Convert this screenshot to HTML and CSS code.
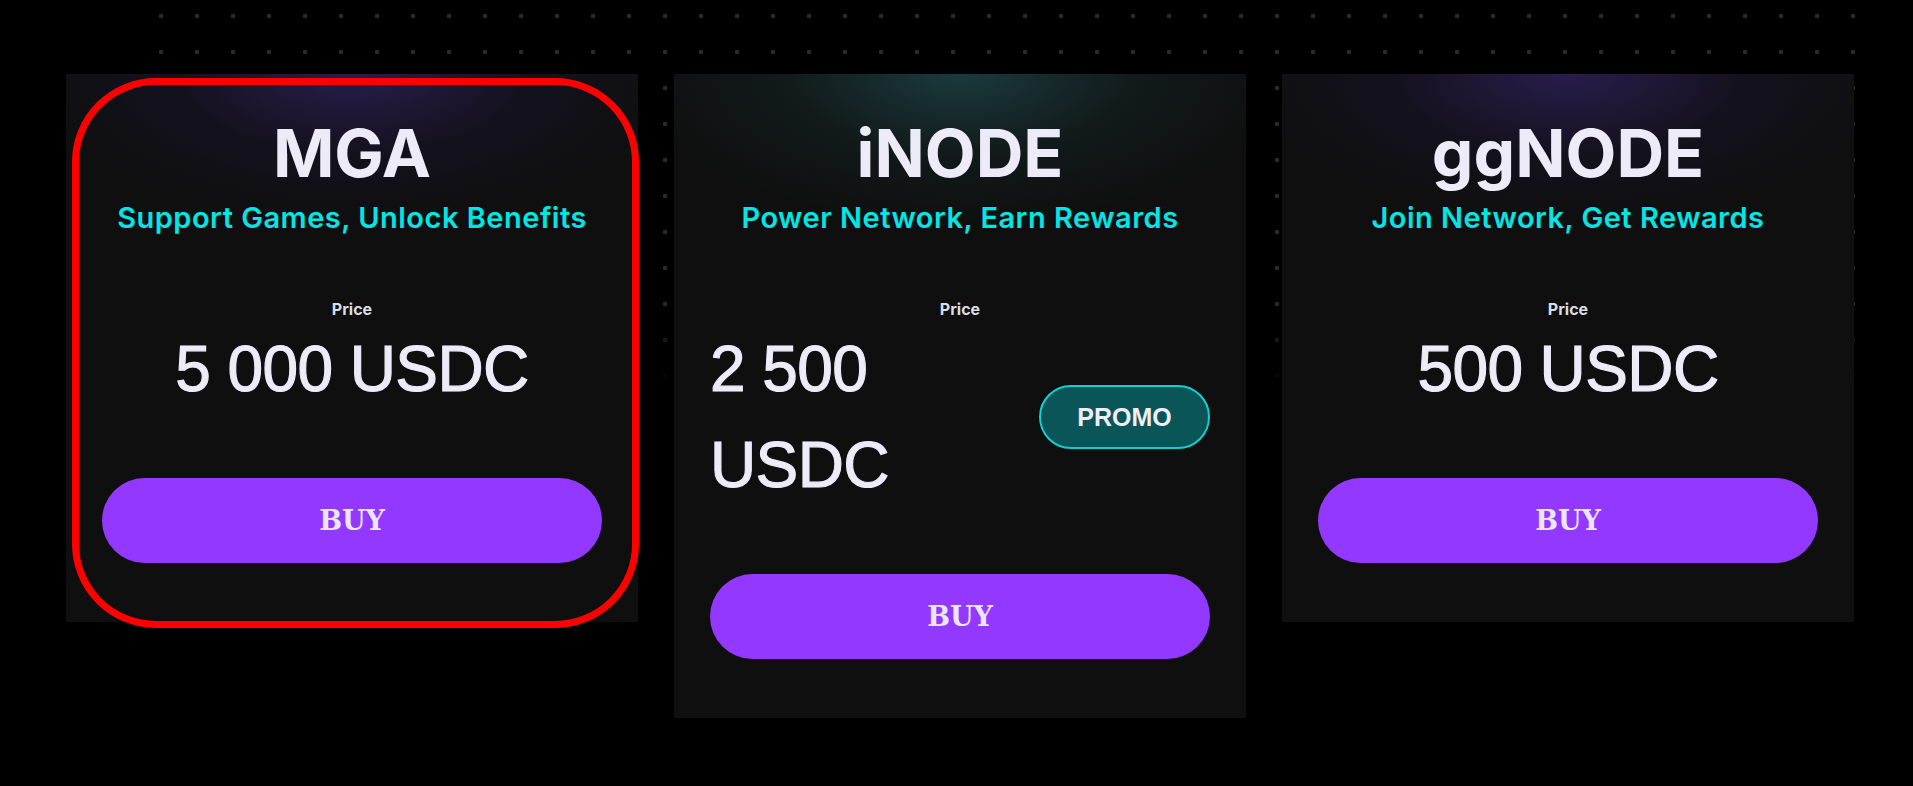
FILE: index.html
```html
<!DOCTYPE html>
<html lang="en">
<head>
<meta charset="utf-8">
<title>Nodes</title>
<link rel="stylesheet" href="styles.css">
</head>
<body>
<div class="dots"></div>
<main class="cards">
  <section class="card card--purple">
    <h2 class="card__title">MGA</h2>
    <p class="card__sub">Support Games, Unlock Benefits</p>
    <p class="card__label">Price</p>
    <div class="card__price">5 000 USDC</div>
    <button class="card__buy">BUY</button>
    <div class="highlight"></div>
  </section>
  <section class="card card--teal">
    <h2 class="card__title">iNODE</h2>
    <p class="card__sub">Power Network, Earn Rewards</p>
    <p class="card__label">Price</p>
    <div class="card__price-row">
      <div class="card__price card__price--left">2 500 USDC</div>
      <span class="promo">PROMO</span>
    </div>
    <button class="card__buy">BUY</button>
  </section>
  <section class="card card--purple">
    <h2 class="card__title">ggNODE</h2>
    <p class="card__sub">Join Network, Get Rewards</p>
    <p class="card__label">Price</p>
    <div class="card__price">500 USDC</div>
    <button class="card__buy">BUY</button>
  </section>
</main>
</body>
</html>
```
FILE: styles.css
```css
* { box-sizing: border-box; }
html, body {
  margin: 0;
  padding: 0;
  background: #000;
  width: 1913px;
  height: 786px;
  overflow: hidden;
}
body {
  position: relative;
  font-family: Inter, "Noto Sans", sans-serif;
  color: #ecebf7;
}
.dots {
  position: absolute;
  left: 143px;
  top: 0;
  width: 1736px;
  height: 400px;
  background-image: radial-gradient(circle at 18px 16px, #2a2a2a 0 2px, transparent 2.6px);
  background-size: 36px 36px;
  -webkit-mask-image: linear-gradient(to bottom, #000 0, #000 300px, transparent 390px);
  mask-image: linear-gradient(to bottom, #000 0, #000 300px, transparent 390px);
  pointer-events: none;
}
.cards {
  position: relative;
  display: flex;
  align-items: flex-start;
  gap: 36px;
  padding: 74px 0 0 66px;
}
.card {
  position: relative;
  width: 572px;
  padding: 40px 36px 59px;
  background-color: #0f0f0f;
  display: flex;
  flex-direction: column;
  align-items: stretch;
  text-align: center;
}
.card--purple {
  background-image: radial-gradient(ellipse 330px 150px at 50% 0%, rgba(48, 34, 96, 0.75), rgba(30, 22, 60, 0.3) 55%, rgba(15, 15, 15, 0) 100%);
}
.card--teal {
  background-image: radial-gradient(ellipse 330px 150px at 50% 0%, rgba(30, 68, 72, 0.8), rgba(22, 44, 46, 0.35) 55%, rgba(15, 15, 15, 0) 100%);
}
.card__title {
  margin: 0;
  font-size: 66px;
  line-height: 79px;
  font-weight: 700;
  letter-spacing: 0;
  color: #ecebf7;
}
.card__sub {
  margin: 8px 0 0;
  font-size: 29px;
  line-height: 34px;
  font-weight: 600;
  color: #00e6e6;
  letter-spacing: 0.5px;
}
.card__label {
  margin: 64px 0 0;
  font-size: 16px;
  line-height: 20px;
  font-weight: 700;
  color: #dcdce4;
}
.card__price {
  margin-top: 2px;
  font-family: "Liberation Sans", Arial, sans-serif;
  font-size: 64px;
  line-height: 96px;
  font-weight: 400;
  letter-spacing: -0.6px;
  color: #ecebf7;
  -webkit-text-stroke: 1.1px #ecebf7;
}
.card__price-row {
  margin-top: 2px;
  display: flex;
  align-items: center;
  justify-content: space-between;
}
.card__price--left {
  margin-top: 0;
  width: 300px;
  text-align: left;
}
.promo {
  display: flex;
  align-items: center;
  justify-content: center;
  width: 171px;
  height: 64px;
  border: 2px solid #12cfd2;
  border-radius: 32px;
  background: #0a5557;
  font-family: "Liberation Sans", Arial, sans-serif;
  font-size: 25px;
  font-weight: 700;
  color: #f0eef8;
}
.card__buy {
  margin-top: 61px;
  height: 85px;
  width: 100%;
  border: 0;
  border-radius: 43px;
  background: #9238ff;
  font-family: "DejaVu Serif", "Liberation Serif", serif;
  font-size: 27px;
  font-weight: 600;
  color: #ebe6f7;
  cursor: pointer;
}
.highlight {
  position: absolute;
  left: 6px;
  top: 4px;
  right: -1px;
  bottom: -6px;
  border: 7px solid #ff0000;
  border-radius: 84px;
  pointer-events: none;
}
```
